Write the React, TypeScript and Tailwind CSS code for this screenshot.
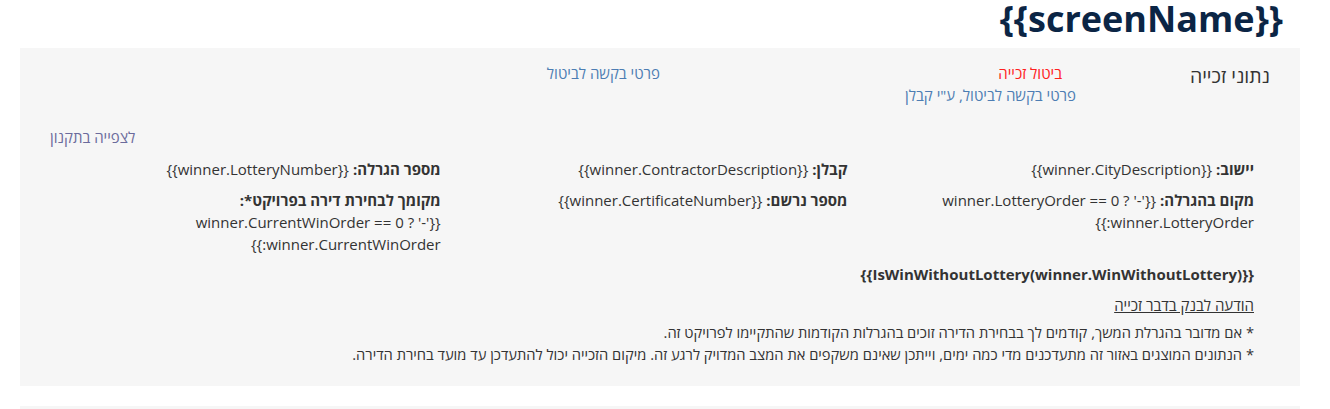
import React from 'react';

const Cell = ({ label, value }: { label: string; value: string }) => (
  <div className="px-[15px] leading-[22px]">
    <span className="font-bold">{label}</span> {value}
  </div>
);

export default function App() {
  return (
    <div dir="rtl" className="bg-white min-h-[409px] text-[#333] text-[15px]" style={{ fontFamily: '"Open Sans", "Noto Sans", sans-serif' }}>
      <h1 className="pr-[47px] h-[48px] text-[36px] leading-[38px] font-bold text-[#0b2545]">{'{{screenName}}'}</h1>

      <div className="ml-5 mr-[30px] bg-[#f6f6f6] h-[338px] pt-[14px]">
        {/* Header */}
        <div className="flex items-start h-[64px] pr-[30px]">
          <div className="w-[194px] text-[19.5px] leading-[26px] pt-[1px]">נתוני זכייה</div>
          <div className="w-[416px] leading-[22px]">
            <div className="text-[#ff2020] pr-[14px]">ביטול זכייה</div>
            <div className="text-[#4d7db3]">פרטי בקשה לביטול, ע"י קבלן</div>
          </div>
          <div className="leading-[22px] text-[#4d7db3]">פרטי בקשה לביטול</div>
        </div>

        <div className="flex justify-end h-[32px] pl-[30px]">
          <a className="leading-[22px] text-[#6b6b9c]">לצפייה בתקנון</a>
        </div>

        {/* Fields */}
        <div className="grid grid-cols-3 pr-[31px] pl-[29px] gap-y-[9px]">
          <Cell label="יישוב:" value="{{winner.CityDescription}}" />
          <Cell label="קבלן:" value="{{winner.ContractorDescription}}" />
          <Cell label="מספר הגרלה:" value="{{winner.LotteryNumber}}" />
          <Cell label="מקום בהגרלה:" value="{{winner.LotteryOrder == 0 ? '-' :winner.LotteryOrder}}" />
          <Cell label="מספר נרשם:" value="{{winner.CertificateNumber}}" />
          <Cell label="מקומך לבחירת דירה בפרויקט*:" value="{{winner.CurrentWinOrder == 0 ? '-' :winner.CurrentWinOrder}}" />
        </div>

        <div className="pr-[46px] mt-[8px]">
          <div className="font-bold leading-[22px]">{'{{IsWinWithoutLottery(winner.WinWithoutLottery)}}'}</div>
          <div className="mt-[9px] leading-[22px]">
            <a className="underline text-[#333] decoration-[#333]">הודעה לבנק בדבר זכייה</a>
          </div>
          <div className="mt-[5px] text-[14.7px] leading-[22px]">
            <div>* אם מדובר בהגרלת המשך, קודמים לך בבחירת הדירה זוכים בהגרלות הקודמות שהתקיימו לפרויקט זה.</div>
            <div>* הנתונים המוצגים באזור זה מתעדכנים מדי כמה ימים, וייתכן שאינם משקפים את המצב המדויק לרגע זה. מיקום הזכייה יכול להתעדכן עד מועד בחירת הדירה.</div>
          </div>
        </div>
      </div>

      <div className="ml-5 mr-[30px] mt-[20px] h-[4px] bg-[#f6f6f6]" />
    </div>
  );
}
